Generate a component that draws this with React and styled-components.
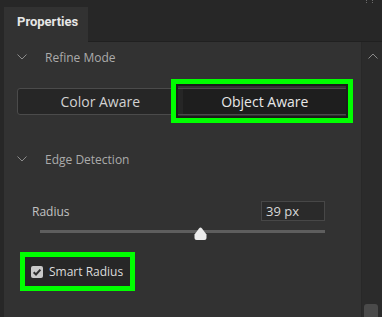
import React from "react";
import styled, { createGlobalStyle } from "styled-components";

const Global = createGlobalStyle`
  html, body { margin: 0; padding: 0; background: #272727; }
  body { width: 382px; height: 317px; overflow: hidden; font-family: "Open Sans", sans-serif; }
`;

const Window = styled.div`
  width: 382px;
  height: 317px;
  box-sizing: border-box;
  padding-left: 4px;
  display: flex;
  flex-direction: column;
  background: #272727;
  overflow: hidden;
`;

const TabBar = styled.div`
  height: 42px;
  flex: none;
  display: flex;
  align-items: flex-end;
`;

const Tab = styled.div`
  width: 84px;
  height: 35px;
  box-sizing: border-box;
  padding: 6px 0 0 13px;
  background: #323232;
  font-family: Roboto, "Open Sans", sans-serif;
  font-weight: 700;
  font-size: 13px;
  line-height: 18px;
  color: #e6e6e6;
`;

const TabFiller = styled.div`
  flex: 1;
  align-self: stretch;
  display: flex;
  justify-content: flex-end;
  align-items: flex-start;
  border-bottom: 1px solid #202020;
  padding-right: 7px;
`;

const Body = styled.div`
  flex: 1;
  display: flex;
  min-height: 0;
`;

const Panel = styled.div`
  flex: 1;
  background: #323232;
  display: flex;
  flex-direction: column;
  align-items: stretch;
`;

const ScrollCol = styled.div`
  width: 21px;
  flex: none;
  box-sizing: border-box;
  background: #2b2b2b;
  border-left: 1px solid #282828;
  display: flex;
  flex-direction: column;
  align-items: flex-start;
  padding-top: 11px;
`;

const ScrollUp = styled.svg`
  margin-left: 6px;
  display: block;
`;

const ScrollThumb = styled.div`
  margin-top: auto;
  margin-left: 2px;
  width: 14px;
  height: 13px;
  background: #4a4a4a;
  border-radius: 3px 3px 0 0;
`;

const SectionHeader = styled.div`
  height: 30px;
  margin-top: ${(p) => p.$top || 0}px;
  display: flex;
  align-items: center;
  gap: 18px;
  padding-left: 13px;
  font-size: 12px;
  color: #ababab;
`;

const Segmented = styled.div`
  margin: 16px 13px 0;
  height: 27px;
  box-sizing: border-box;
  border: 1px solid #4b4b4b;
  border-radius: 3px;
  display: grid;
  grid-template-columns: 1fr 1fr;
  background: #262626;
`;

const Segment = styled.div`
  position: relative;
  display: flex;
  align-items: center;
  justify-content: center;
  font-size: 14px;
  color: ${(p) => (p.$active ? "#e8e8e8" : "#d2d2d2")};
  background: ${(p) => (p.$active ? "#1e1e1e" : "transparent")};
  ${(p) =>
    p.$marked &&
    `
    &::after {
      content: "";
      position: absolute;
      left: -12px;
      top: -10px;
      right: -6px;
      bottom: -9px;
      border: 5px solid #00ff00;
      box-shadow: inset 0 0 0 2px #1b1b1b;
      pointer-events: none;
    }
  `}
`;

const RadiusRow = styled.div`
  margin: 27px 36px 0 28px;
  height: 20px;
  display: flex;
  align-items: center;
  justify-content: space-between;
`;

const Label = styled.span`
  font-size: 12px;
  color: #c2c2c2;
`;

const ValueBox = styled.div`
  width: 64px;
  height: 20px;
  box-sizing: border-box;
  border: 1px solid #474747;
  background: #2a2a2a;
  padding-left: 4px;
  display: flex;
  align-items: center;
  font-size: 13px;
  color: #d8d8d8;
`;

const Track = styled.div`
  position: relative;
  margin: 9px 36px 0;
  height: 3px;
  background: #5e5e5e;
`;

const Thumb = styled.svg`
  position: absolute;
  top: -3px;
  display: block;
`;

const CheckRow = styled.label`
  align-self: flex-start;
  margin: 19px 0 0 16px;
  height: 39px;
  box-sizing: border-box;
  border: 5px solid #00ff00;
  background: #272727;
  padding: 0 7px 0 6px;
  display: inline-flex;
  align-items: center;
  gap: 6px;
  font-size: 12px;
  color: #dcdcdc;
`;

const CheckBox = styled.span`
  width: 12px;
  height: 12px;
  border-radius: 2px;
  background: #c9c9c9;
  display: flex;
  align-items: center;
  justify-content: center;
`;

const Chevron = () => (
  <svg width="10" height="6" viewBox="0 0 10 6">
    <path d="M0.5 0.5 L5 5 L9.5 0.5" fill="none" stroke="#8c8c8c" strokeWidth="1" />
  </svg>
);

const Grip = () => (
  <svg width="10" height="4" viewBox="0 0 10 4">
    <rect x="1" y="0" width="1" height="1" fill="#6a6a6a" />
    <rect x="1" y="2" width="1" height="1" fill="#6a6a6a" />
    <rect x="7" y="0" width="1" height="1" fill="#6a6a6a" />
    <rect x="7" y="2" width="1" height="1" fill="#6a6a6a" />
  </svg>
);

export default function App() {
  const radius = 0.563;
  return (
    <>
      <Global />
      <Window>
        <TabBar>
          <Tab>Properties</Tab>
          <TabFiller>
            <Grip />
          </TabFiller>
        </TabBar>
        <Body>
          <Panel>
            <SectionHeader>
              <Chevron />
              <span>Refine Mode</span>
            </SectionHeader>
            <Segmented>
              <Segment>Color Aware</Segment>
              <Segment $active $marked>
                Object Aware
              </Segment>
            </Segmented>
            <SectionHeader $top={29}>
              <Chevron />
              <span>Edge Detection</span>
            </SectionHeader>
            <RadiusRow>
              <Label>Radius</Label>
              <ValueBox>39 px</ValueBox>
            </RadiusRow>
            <Track>
              <Thumb
                width="13"
                height="13"
                viewBox="0 0 13 13"
                style={{ left: `calc(${radius * 100}% - 6.5px)` }}
              >
                <path d="M6.5 0.5 Q7.2 0.5 8 1.5 L12.5 7.5 V11 Q12.5 13 10.5 13 H2.5 Q0.5 13 0.5 11 V7.5 L5 1.5 Q5.8 0.5 6.5 0.5 Z" fill="#ececec" />
              </Thumb>
            </Track>
            <CheckRow>
              <CheckBox>
                <svg width="12" height="12" viewBox="0 0 12 12">
                  <path d="M2.7 6.2 L5 8.5 L9.4 3.6" fill="none" stroke="#2e2e2e" strokeWidth="2" />
                </svg>
              </CheckBox>
              <span>Smart Radius</span>
            </CheckRow>
          </Panel>
          <ScrollCol>
            <ScrollUp width="10" height="6" viewBox="0 0 10 6">
              <path d="M0.5 5.5 L5 1 L9.5 5.5" fill="none" stroke="#8a8a8a" strokeWidth="1" />
            </ScrollUp>
            <ScrollThumb />
          </ScrollCol>
        </Body>
      </Window>
    </>
  );
}
